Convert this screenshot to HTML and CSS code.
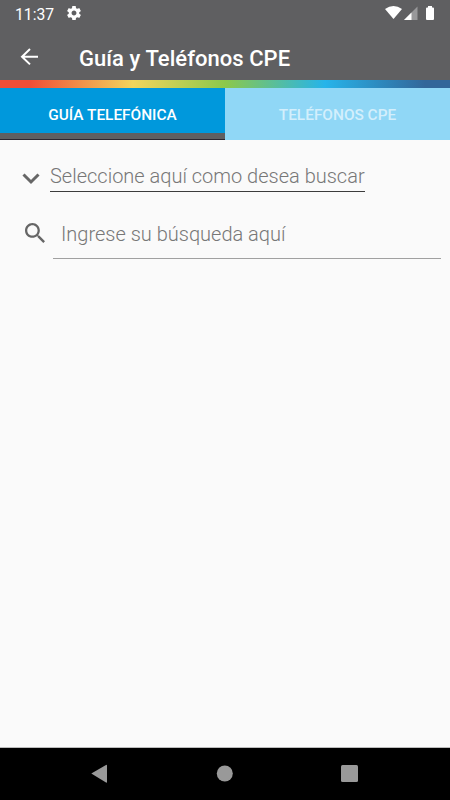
FILE: index.html
```
<!DOCTYPE html>
<html lang="es">
<head>
	<meta charset="UTF-8">
	<title>Guía y Teléfonos CPE</title>
	<link rel="stylesheet" href="styles.css">
</head>
<body>
	<div class="status">
		<span class="time">11:37</span>
		<svg class="gear" width="14" height="14" viewBox="2 2 20 20"><path fill="#fff" d="M19.430 12.980c.04-.32.07-.64.07-.98s-.03-.66-.07-.98l2.110-1.650c.19-.15.24-.42.12-.64l-2-3.460c-.12-.22-.39-.3-.61-.22l-2.490 1c-.52-.4-1.080-.73-1.690-.98l-.38-2.650C14.460 2.180 14.250 2 14 2h-4c-.25 0-.46.18-.49.42l-.38 2.650c-.61.25-1.170.59-1.690.98l-2.490-1c-.23-.09-.49 0-.61.22l-2 3.460c-.13.22-.07.49.12.64l2.110 1.650c-.04.32-.07.65-.07.98s.03.66.07.98l-2.110 1.650c-.19.15-.24.42-.12.64l2 3.460c.12.22.39.3.61.22l2.490-1c.52.4 1.080.73 1.690.98l.38 2.650c.03.24.24.42.49.42h4c.25 0 .46-.18.49-.42l.38-2.650c.61-.25 1.170-.59 1.690-.98l2.490 1c.23.09.49 0 .61-.22l2-3.460c.12-.22.07-.49-.12-.64l-2.110-1.650zM12 15.500c-1.930 0-3.500-1.570-3.500-3.500s1.570-3.500 3.500-3.500 3.500 1.570 3.500 3.500-1.570 3.500-3.500 3.500z"/></svg>
		<svg class="signal" width="54" height="16" viewBox="0 0 54 16">
			<path fill="#fff" d="M0 4Q8.500-1.800 17 4L8.500 14Z"/>
			<path fill="#98989a" d="M19 15L32.500 1.500V15Z"/>
			<path fill="#fff" d="M19 15L26.500 7.500V15Z"/>
			<path fill="#fff" d="M43 1h4v1.500h1q1 0 1 1V14q0 1-1 1h-6q-1 0-1-1V3.500q0-1 1-1H43Z"/>
		</svg>
	</div>
	<div class="bar">
		<svg class="back" width="18" height="18" viewBox="0 0 18 18"><path fill="none" stroke="#fff" stroke-width="2" d="M18 8.700H2M10 1L2 8.700l8 7.700"/></svg>
		<h1>Guía y Teléfonos CPE</h1>
	</div>
	<div class="rainbow"></div>
	<div class="tabs">
		<div class="tab active">GUÍA TELEFÓNICA</div>
		<div class="tab">TELÉFONOS CPE</div>
	</div>
	<div class="content">
		<div class="select">
			<svg width="18" height="12" viewBox="0 0 18 12"><path fill="none" stroke="#666" stroke-width="3" d="M1.500 1.500L9 9l7.500-7.500"/></svg>
			<span class="hint">Seleccione aquí como desea buscar</span>
		</div>
		<div class="search">
			<svg width="20" height="20" viewBox="3 3 17.500 17.500"><path fill="#666" d="M15.500 14h-.79l-.28-.27C15.410 12.590 16 11.110 16 9.500 16 5.910 13.090 3 9.500 3S3 5.910 3 9.500 5.910 16 9.500 16c1.610 0 3.090-.59 4.230-1.570l.27.28v.79l5 4.990L20.490 19l-4.990-5zm-6 0C7.010 14 5 11.990 5 9.500S7.010 5 9.500 5 14 7.010 14 9.500 11.990 14 9.500 14z"/></svg>
			<span class="hint">Ingrese su búsqueda aquí</span>
		</div>
	</div>
	<div class="nav">
		<svg width="450" height="52" viewBox="0 0 450 52">
			<path fill="#999" d="M91.300 25.500L106 17q1-.5 1 .5v16.500q0 1-1 .5Z"/>
			<circle fill="#999" cx="224.800" cy="25.500" r="8"/>
			<rect fill="#999" x="341" y="17" width="17" height="17" rx="1.500"/>
		</svg>
	</div>
</body>
</html>
```
FILE: styles.css
```
body,h1{ margin: 0;padding: 0; }
body{ width: 450px;height: 800px;background: #fafafa;font-family: Roboto,"Noto Sans",sans-serif;display: flex;flex-direction: column;overflow: hidden; }
svg{ display: block;flex: none; }

.status{ height: 28px;background: #5f5f61;color: #fff;display: flex;align-items: flex-start; }
.time{ width: 51px;padding-left: 15px;font-size: 15.7px;line-height: 29px;white-space: nowrap; }
.gear{ margin: 6px 0 0 1px; }
.signal{ margin: 5px 11px 0 auto; }

.bar{ height: 52px;background: #5f5f61;color: #fff;display: flex; }
.back{ margin: 20px 0 0 20px; }
.bar h1{ margin-left: 41px;font-size: 22px;font-weight: 500;letter-spacing: .05px;line-height: 61px;white-space: nowrap; }
.rainbow{ height: 8px;background: linear-gradient(to right,#f04e37 0,#f04e37 30px,#f2d55c 133px,#8cc84b 225px,#26b4ea 325px,#336699 425px,#336699 450px); }

.tabs{ height: 52px;display: flex; }
.tab{ width: 225px;box-sizing: border-box;background: #90d7f6;color: #d3effc;font-size: 15.4px;font-weight: 500;line-height: 54px;text-align: center;white-space: nowrap; }
.active{ height: 51px;background: #0098dc;color: #fff;border-bottom: 6px solid #5f5f61;box-shadow: 0 1px 0 #2b2630; }

.content{ flex: 1;border-bottom: 1px solid #bbb;font-size: 20px;font-weight: 300;color: #777; }
.select{ display: flex;padding: 20px 0 0 22px; }
.select svg{ margin: 13px 10px 0 0; }
.select .hint{ width: 315px;height: 31px;line-height: 33px;border-bottom: 1px solid #3c3c3c; }
.search{ display: flex;padding: 26px 9px 0 25px; }
.search svg{ margin: 5px 8px 0 0; }
.search .hint{ flex: 1;height: 40px;padding-left: 8px;line-height: 32px;border-bottom: 1px solid #a0a0a0; }
.hint{ white-space: nowrap; }

.nav{ height: 52px;background: #000; }
```
